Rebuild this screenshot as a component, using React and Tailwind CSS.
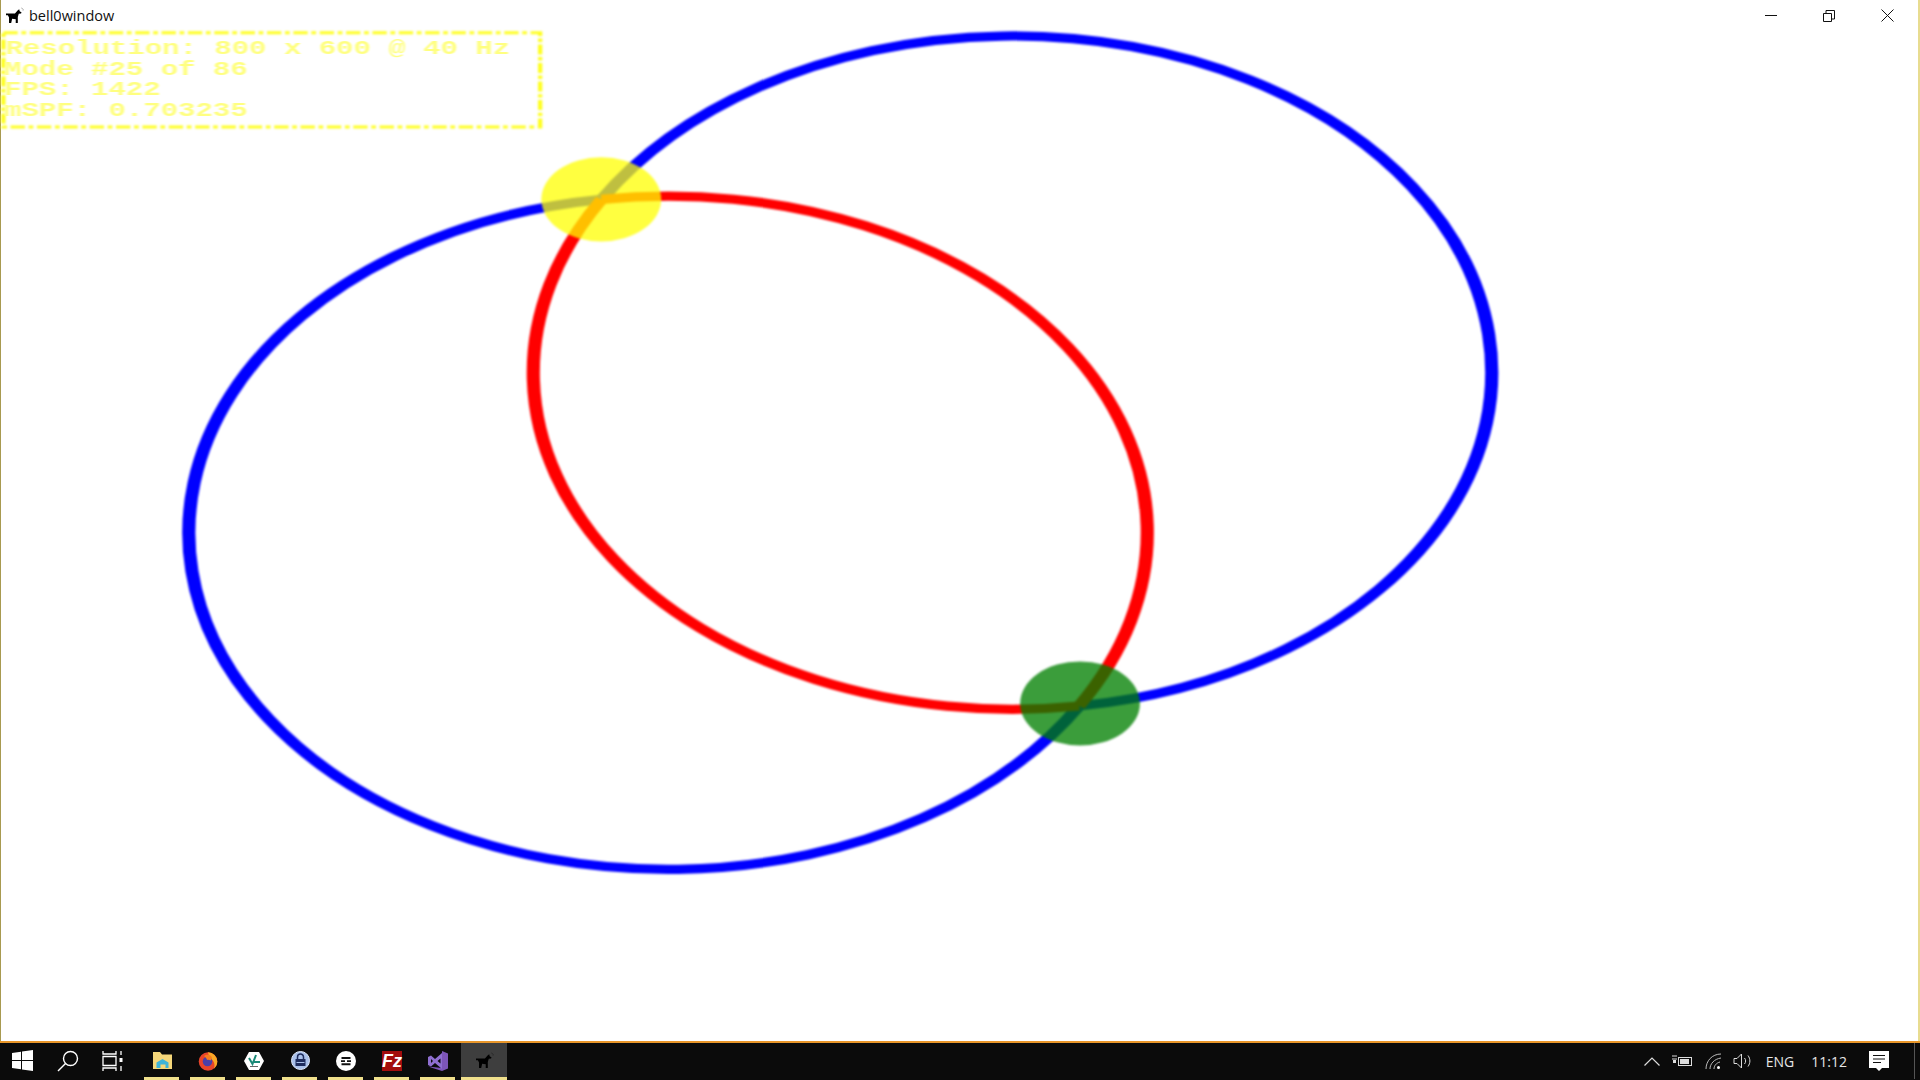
const mono = { fontFamily: '"Liberation Mono", monospace' }

function Dog({ className, fill = '#000' }) {
  return (
    <svg viewBox="0 0 20 18" className={className} fill={fill}>
      <path d="M1 7h9.500l3-3.500 1.500-1 .5 2 2 1.200-.6 1.300-2.400.2-1 3.500v6.300h-2.200v-4l-3.800-.5-1 4.500H4.200V11L3 8.800H1z" />
      <path d="M17.500 1.200l1 .6M18.700 3.200l.9-.2" stroke={fill} strokeWidth=".6" fill="none" />
    </svg>
  )
}

function Slot({ active, children }) {
  return (
    <div className={`relative flex w-[46px] items-center justify-center pb-[2px] ${active ? 'bg-[#3e3e3e]' : ''}`}>
      {children}
      <div className={`absolute bottom-0 h-[3px] bg-[#f0e08c] ${active ? 'left-0 right-0' : 'left-[5px] right-[6px]'}`} />
    </div>
  )
}

export default function App() {
  return (
    <div className="flex h-[1080px] w-[1920px] flex-col overflow-hidden bg-white" style={{ fontFamily: '"Open Sans", sans-serif' }}>
      {/* title bar */}
      <div className="flex h-[31px] shrink-0 items-center border-l border-r-2 border-l-[#a89a50] border-r-[#e8dc90] pl-[4px]">
        <Dog className="h-[17px] w-[19px]" />
        <span className="ml-[5px] text-[14.500px] text-[#111]">bell0window</span>
        <div className="ml-auto flex h-full items-center pr-[2px]">
          <div className="flex w-[58px] justify-center">
            <svg width="12" height="12" viewBox="0 0 12 12" stroke="#111" fill="none"><path d="M0 5.500h12" /></svg>
          </div>
          <div className="flex w-[58px] justify-center">
            <svg width="12" height="12" viewBox="0 0 12 12" stroke="#111" fill="none"><path d="M.5 3.500h8v8h-8zM3 3.500V.5h8.500v8.500H8.500" /></svg>
          </div>
          <div className="flex w-[58px] justify-center">
            <svg width="13" height="13" viewBox="0 0 13 13" stroke="#111" fill="none"><path d="M.5.5l12 12M12.500.5l-12 12" /></svg>
          </div>
        </div>
      </div>

      {/* render area, 800x600 stretched to the window */}
      <div className="relative min-h-0 flex-1 border-l border-r-2 border-l-[#a89a50] border-r-[#e8dc90]">
        <svg className="h-full w-full blur-[0.8px]" viewBox="0 0 800 600" preserveAspectRatio="none">
          <g fill="none" strokeWidth="5.500">
            <path d="M250.650 100A200 200 0 1 1 449.850 401" stroke="#0000ff" />
            <path d="M449.850 401A200 200 0 1 1 250.650 100" stroke="#0000ff" />
            <path d="M449.850 401A200 200 0 0 1 250.650 100" stroke="#ff0000" />
            <path d="M250.650 100A200 200 0 0 1 449.850 401" stroke="#ff0000" />
          </g>
          <circle cx="250.500" cy="100" r="25" fill="#ffff00" fillOpacity=".75" />
          <circle cx="450.300" cy="399.500" r="25" fill="#008000" fillOpacity=".77" />
          <rect x="1" y="1" width="224" height="56" fill="none" stroke="#ffff20" strokeWidth="1.800" strokeDasharray="6 1.500 2 1.500" />
        </svg>
        <div className="absolute left-[3px] top-[8px] origin-top-left scale-x-[1.45] text-[20px] font-bold leading-[20.500px] whitespace-pre text-[#ffff80] blur-[0.6px]" style={mono}>
          <div className="pl-[1px]">Resolution: 800 x 600 @ 40 Hz</div>
          <div>Mode #25 of 86</div>
          <div>FPS: 1422</div>
          <div>mSPF: 0.703235</div>
        </div>
      </div>

      {/* taskbar */}
      <div className="flex h-[39px] shrink-0 border-t-2 border-t-[#e8962a] bg-[#0b0b0b]">
        <div className="flex w-[45px] items-center justify-center pb-[2px]">
          <svg width="21" height="21" viewBox="0 0 21 21" fill="#fff"><path d="M0 3l9-1.300V10H0zM10 1.500L21 0v10H10zM0 11h9v8.300L0 18zM10 11h11v10l-11-1.500z" /></svg>
        </div>
        <div className="flex w-[45px] items-center justify-center pb-[2px]">
          <svg width="22" height="22" viewBox="0 0 22 22" fill="none" stroke="#fff" strokeWidth="1.400"><circle cx="13.500" cy="8.500" r="7" /><path d="M8.500 13.500L1 21" /></svg>
        </div>
        <div className="flex w-[45px] items-center justify-center pb-[2px]">
          <svg width="22" height="20" viewBox="0 0 22 20" fill="none" stroke="#fff" strokeWidth="1.300"><path d="M1 0v3h13V0M1 5.500h13v9H1zM1 20v-3h13v3" /><path d="M19 0v4M19 15v5" /><path d="M19 7v4" strokeWidth="3" /></svg>
        </div>
        <div className="ml-[4px] flex">
          <Slot>
            <svg width="19" height="17" viewBox="0 0 19 17"><path d="M0 0h7l2 2.500h10V17H0z" fill="#f5d77a" /><path d="M3.500 16v-5.500L9.500 7l6 3.500V16h-3v-3.500h-5V16z" fill="#3fb4d8" /></svg>
          </Slot>
          <Slot>
            <svg width="20" height="20" viewBox="0 0 20 20">
              <circle cx="10" cy="10.500" r="9.300" fill="#e8442a" />
              <path d="M10 1.200a9.300 9.300 0 019.300 9.300c0 3-1.400 5.600-3.500 7.300 1.200-2.500 1-6-1-8.300C13 7 11 6 10 1.200z" fill="#f9a825" />
              <circle cx="9.500" cy="10.500" r="4.800" fill="#4a3fa8" />
              <path d="M6 5c2-1.500 5-2 7 0 1.500 1.500 1 3.500-.5 4.500-1-.8-2.500-.8-3.500-.5C9 7.500 7.500 6.500 6 5z" fill="#f57c1f" />
            </svg>
          </Slot>
          <Slot>
            <svg width="20" height="18" viewBox="0 0 20 18"><path d="M5 0h10l5 9-5 9H5L0 9z" fill="#fff" /><path d="M5 6l3.500 6L12 3M10 10h6" fill="none" stroke="#1a8a78" strokeWidth="2" /><path d="M6 14.500h8" stroke="#666" /></svg>
          </Slot>
          <Slot>
            <svg width="19" height="19" viewBox="0 0 19 19"><circle cx="9.500" cy="9.500" r="9" fill="#a9c0ea" stroke="#dfe8fa" /><path d="M6.500 8V6a3 3 0 016 0v2" fill="none" stroke="#1d2b5c" strokeWidth="1.500" /><rect x="4.500" y="8" width="10" height="7" fill="#1d2b5c" /><path d="M5.500 11.500h8" stroke="#a9c0ea" /></svg>
          </Slot>
          <Slot>
            <svg width="20" height="20" viewBox="0 0 20 20"><circle cx="10" cy="10" r="10" fill="#fff" /><path d="M5.500 6h9v2h-9zM5 9.200h4v1.800H5zM11 9.200h4v1.800h-4zM5.500 12.300h9v2h-9z" fill="#111" /></svg>
          </Slot>
          <Slot>
            <div className="flex h-[20px] w-[20px] items-center justify-center bg-[#a30d0d] text-[18px] font-bold italic leading-none text-white" style={{ fontFamily: '"Liberation Sans", sans-serif' }}>Fz</div>
          </Slot>
          <Slot>
            <svg width="20" height="20" viewBox="0 0 20 20">
              <path d="M14 0l6 2.500v15L14 20 0 15.500l14 1.500z" fill="#7d55b8" />
              <path d="M0 6l3-1.500L7 8l7-6v16l-7-6-4 3.500L0 14zM3 8v4l2-2zM9.500 10l3 2.500v-5z" fill="#8f6fd0" fillRule="evenodd" />
            </svg>
          </Slot>
          <Slot active>
            <Dog className="h-[17px] w-[19px]" />
          </Slot>
        </div>
        <div className="ml-auto flex items-center pb-[1px] text-[#e6e6e6]">
          <svg width="16" height="9" viewBox="0 0 16 9" fill="none" stroke="#ddd" strokeWidth="1.200"><path d="M.5 8.500L8 1l7.500 7.500" /></svg>
          <svg className="ml-[12px]" width="20" height="12" viewBox="0 0 20 12"><path d="M0 1h5M0 4h5" stroke="#ddd" /><rect x="1" y="5" width="3" height="3" fill="#ddd" /><rect x="6.500" y="2.500" width="13" height="8" fill="none" stroke="#ddd" /><rect x="8" y="4" width="9" height="5" fill="#ddd" /></svg>
          <svg className="ml-[13px]" width="17" height="17" viewBox="0 0 17 17" fill="none" stroke="#bbb"><path d="M1 16C1 8 7 1 16 1M5 16c0-5 4-10 11-11M9 16c0-3 2-6 6-7" /><circle cx="13.500" cy="14.500" r="1.500" fill="#fff" stroke="none" /></svg>
          <svg className="ml-[11px]" width="20" height="16" viewBox="0 0 20 16" fill="none" stroke="#ddd"><path d="M1 5.500h3L8.500 1v14L4 10.500H1z" /><path d="M11.500 5c1.500 2 1.500 4 0 6M15 2.500c2.500 3.500 2.500 7.500 0 11" /></svg>
          <span className="ml-[13px] text-[14px]">ENG</span>
          <span className="ml-[17px] text-[14px]">11:12</span>
          <div className="ml-[22px] flex w-[20px] items-center justify-center">
            <svg width="20" height="21" viewBox="0 0 20 21"><path d="M0 0h20v17h-7l-3 3-3-3H0z" fill="#fff" /><path d="M4 4.500h12M4 8h12M4 11.500h8" stroke="#111" /></svg>
          </div>
          <div className="ml-[25px] h-full w-[6px] border-l border-l-[#555]" />
        </div>
      </div>
    </div>
  )
}
